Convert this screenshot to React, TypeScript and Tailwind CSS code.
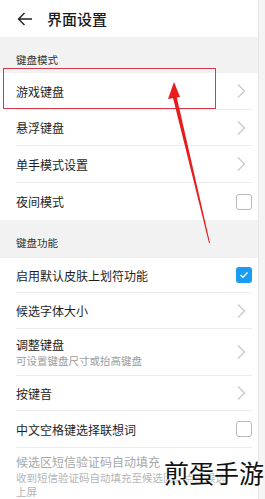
import React from "react";

const Chevron = () => (
  <svg width="10" height="16" viewBox="0 0 10 16" className="shrink-0 mr-[6px]">
    <polyline points="2,1.5 8.5,8 2,14.5" fill="none" stroke="#c9c9c9" strokeWidth="1.3" />
  </svg>
);

const Box = ({ checked }: { checked?: boolean }) =>
  checked ? (
    <div className="w-[16px] h-[16px] rounded-[3px] bg-[#1a9cf0] flex items-center justify-center shrink-0">
      <svg width="10" height="8" viewBox="0 0 10 8">
        <polyline points="1.5,4 4,6.3 8.5,1.5" fill="none" stroke="#fff" strokeWidth="1.4" />
      </svg>
    </div>
  ) : (
    <div className="w-[16px] h-[16px] rounded-[3px] border border-[#b8b8b8] bg-white shrink-0" />
  );

const Row = ({
  title,
  sub,
  right,
  h,
  last,
}: {
  title: string;
  sub?: string[];
  right?: React.ReactNode;
  h: string;
  last?: boolean;
}) => (
  <div className="pl-[16px] pr-[6px]">
    <div className={`flex items-center justify-between ${h} ${last ? "" : "border-b border-[#ececec]"}`}>
      <div className="flex flex-col">
        <span className="text-[12px] leading-[17px] text-[#1e1e1e]">{title}</span>
        {sub?.map((s) => (
          <span key={s} className="text-[10.5px] leading-[15px] text-[#9c9c9c] whitespace-nowrap">{s}</span>
        ))}
      </div>
      {right}
    </div>
  </div>
);

export default function App() {
  return (
    <div
      className="relative w-[265px] h-[499px] overflow-hidden bg-white flex"
      style={{ fontFamily: '"Noto Sans CJK SC", "Noto Sans", sans-serif' }}
    >
      <div className="w-[258px] flex flex-col shrink-0">
        <div className="h-[37px] flex items-center pl-[17px] shrink-0">
          <svg width="16" height="14" viewBox="0 0 16 14">
            <path d="M15 7H1.5M7.5 1L1.5 7l6 6" fill="none" stroke="#222" strokeWidth="1.4" />
          </svg>
          <span className="ml-[14px] text-[15px] font-medium text-[#1a1a1a] leading-none">界面设置</span>
        </div>
        <div className="h-[36px] bg-[#f2f2f2] flex items-end pl-[16px] pb-[6px] shrink-0">
          <span className="text-[10.5px] leading-[14px] text-[#333]">键盘模式</span>
        </div>
        <Row title="游戏键盘" h="h-[37px]" right={<Chevron />} />
        <Row title="悬浮键盘" h="h-[36px]" right={<Chevron />} />
        <Row title="单手模式设置" h="h-[37px]" right={<Chevron />} />
        <Row title="夜间模式" h="h-[37px]" last right={<Box />} />
        <div className="h-[38px] bg-[#f2f2f2] flex items-end pl-[16px] pb-[8px] shrink-0">
          <span className="text-[10.5px] leading-[14px] text-[#333]">键盘功能</span>
        </div>
        <Row title="启用默认皮肤上划符功能" h="h-[35px]" right={<Box checked />} />
        <Row title="候选字体大小" h="h-[36px]" right={<Chevron />} />
        <Row title="调整键盘" sub={["可设置键盘尺寸或抬高键盘"]} h="h-[47px]" right={<Chevron />} />
        <Row title="按键音" h="h-[35px]" right={<Chevron />} />
        <Row title="中文空格键选择联想词" h="h-[37px]" right={<Box />} />
        <div className="pl-[16px] pt-[5px] flex flex-col">
          <span className="text-[12px] leading-[17px] text-[#a8a8a8]">候选区短信验证码自动填充</span>
          <span className="text-[10.5px] leading-[15px] text-[#b5b5b5] whitespace-nowrap">收到短信验证码自动填充至候选区，点击候选</span>
          <span className="text-[10.5px] leading-[14px] text-[#b5b5b5]">上屏</span>
        </div>
      </div>
      <div className="flex-1 bg-[#f4f4f4] border-l border-[#e4e4e4]" />

      {/* red highlight box */}
      <div className="absolute left-[3px] top-[68px] w-[213px] h-[41px] border-[1.5px] border-[#d23a4a]" />

      {/* red arrow */}
      <svg className="absolute left-0 top-0" width="265" height="499" viewBox="0 0 265 499">
        <polygon points="172.5,96 176.5,96 210,243 209,243" fill="#e81c1c" />
        <polygon points="174,82 168,99 180,97" fill="#e81c1c" />
      </svg>

      {/* watermark */}
      <div
        className="absolute left-[164px] top-[452px] text-[25px] leading-[40px] text-[#111] whitespace-nowrap"
        style={{ textShadow: "0 0 2px #fff, 0 0 2px #fff, 0 0 3px #fff" }}
      >
        煎蛋手游
      </div>
    </div>
  );
}
